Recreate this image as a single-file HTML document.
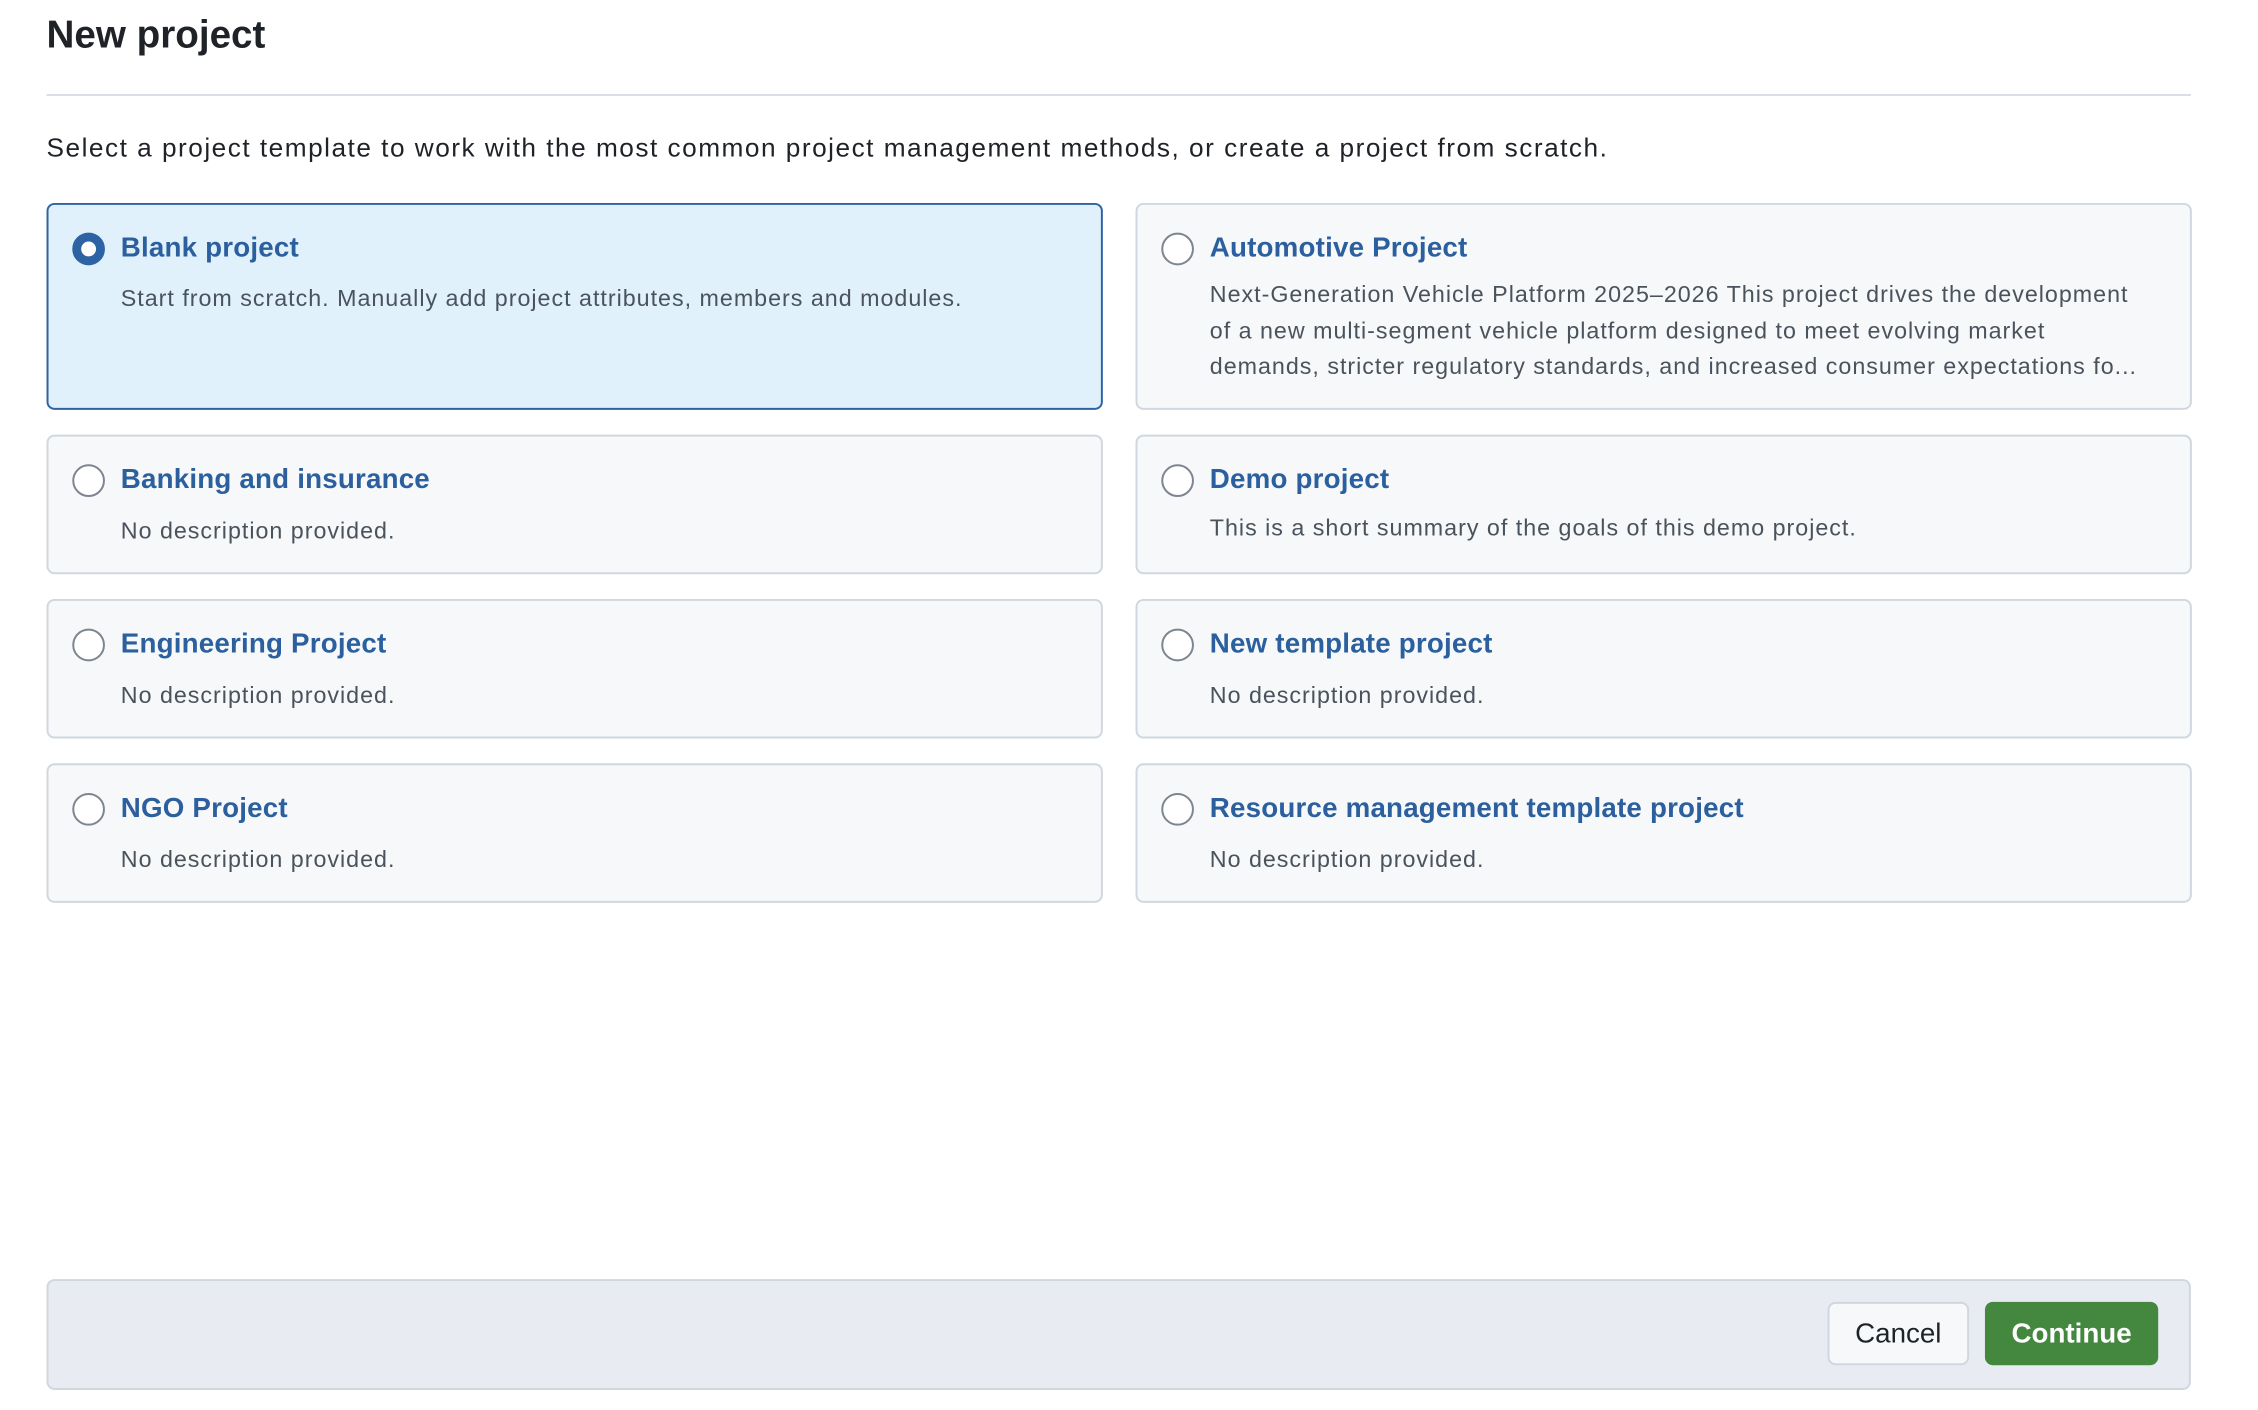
<!DOCTYPE html>
<html><head><meta charset="utf-8"><style>
*{box-sizing:border-box;margin:0;padding:0}
body{width:2258px;height:1410px;background:#fff;font-family:"Liberation Sans",sans-serif;overflow:hidden;color:#1f2328}
#w{position:relative;width:2281px;height:1424px;transform:scale(0.99);transform-origin:0 0}
h1{position:absolute;left:47px;top:14px;font-size:39px;font-weight:600;letter-spacing:0px}
.hr{position:absolute;left:47px;width:2166px;top:95px;height:2px;background:#d8dee4}
.intro{position:absolute;left:47px;top:134px;font-size:26.5px;letter-spacing:1.5px;white-space:nowrap}
.card{position:absolute;background:#f6f8fa;border:2px solid #d0d7de;border-radius:8px}
.card.sel{background:#e1f1fc;border-color:#2e63a3}
.radio{position:absolute;left:24px;top:28px;width:33px;height:33px;border-radius:50%;border:2px solid #7d8590;background:#fff}
.sel .radio{border:9px solid #2e63a3}
.t{position:absolute;left:73px;top:27px;font-size:28px;font-weight:700;color:#2b5f9e;white-space:nowrap;letter-spacing:0.2px}
.d{position:absolute;left:73px;top:77px;font-size:23.5px;color:#4a535c;line-height:36.5px;white-space:nowrap;letter-spacing:1px}
.footer{position:absolute;left:47px;top:1292px;width:2166px;height:112px;background:#e8ebf2;border:2px solid #d0d7de;border-radius:8px}
.btn{position:absolute;top:1315px;height:64px;border-radius:8px;font-size:28px;display:flex;align-items:center;justify-content:center}
</style></head><body><div id="w">
<h1>New project</h1>
<div class="hr"></div>
<div class="intro">Select a project template to work with the most common project management methods, or create a project from scratch.</div>

<div class="card sel" style="left:47px;top:205px;width:1067px;height:209px"><div class="radio"></div><div class="t">Blank project</div><div class="d" style="top:76px">Start from scratch. Manually add project attributes, members and modules.</div></div>
<div class="card" style="left:1147px;top:205px;width:1067px;height:209px"><div class="radio"></div><div class="t">Automotive Project</div><div class="d" style="top:72px">Next-Generation Vehicle Platform 2025–2026 This project drives the development<br>of a new multi-segment vehicle platform designed to meet evolving market<br>demands, stricter regulatory standards, and increased consumer expectations fo...</div></div>

<div class="card" style="left:47px;top:439px;width:1067px;height:141px"><div class="radio"></div><div class="t">Banking and insurance</div><div class="d">No description provided.</div></div>
<div class="card" style="left:1147px;top:439px;width:1067px;height:141px"><div class="radio"></div><div class="t">Demo project</div><div class="d" style="top:74px">This is a short summary of the goals of this demo project.</div></div>

<div class="card" style="left:47px;top:605px;width:1067px;height:141px"><div class="radio"></div><div class="t">Engineering Project</div><div class="d">No description provided.</div></div>
<div class="card" style="left:1147px;top:605px;width:1067px;height:141px"><div class="radio"></div><div class="t">New template project</div><div class="d">No description provided.</div></div>

<div class="card" style="left:47px;top:771px;width:1067px;height:141px"><div class="radio"></div><div class="t">NGO Project</div><div class="d">No description provided.</div></div>
<div class="card" style="left:1147px;top:771px;width:1067px;height:141px"><div class="radio"></div><div class="t">Resource management template project</div><div class="d">No description provided.</div></div>

<div class="footer"></div>
<div class="btn" style="left:1846px;width:143px;background:#f6f8fa;border:2px solid #d0d7de;color:#1f2328">Cancel</div>
<div class="btn" style="left:2005px;width:175px;background:#44883f;color:#fff;font-weight:600">Continue</div>
</div></body></html>
